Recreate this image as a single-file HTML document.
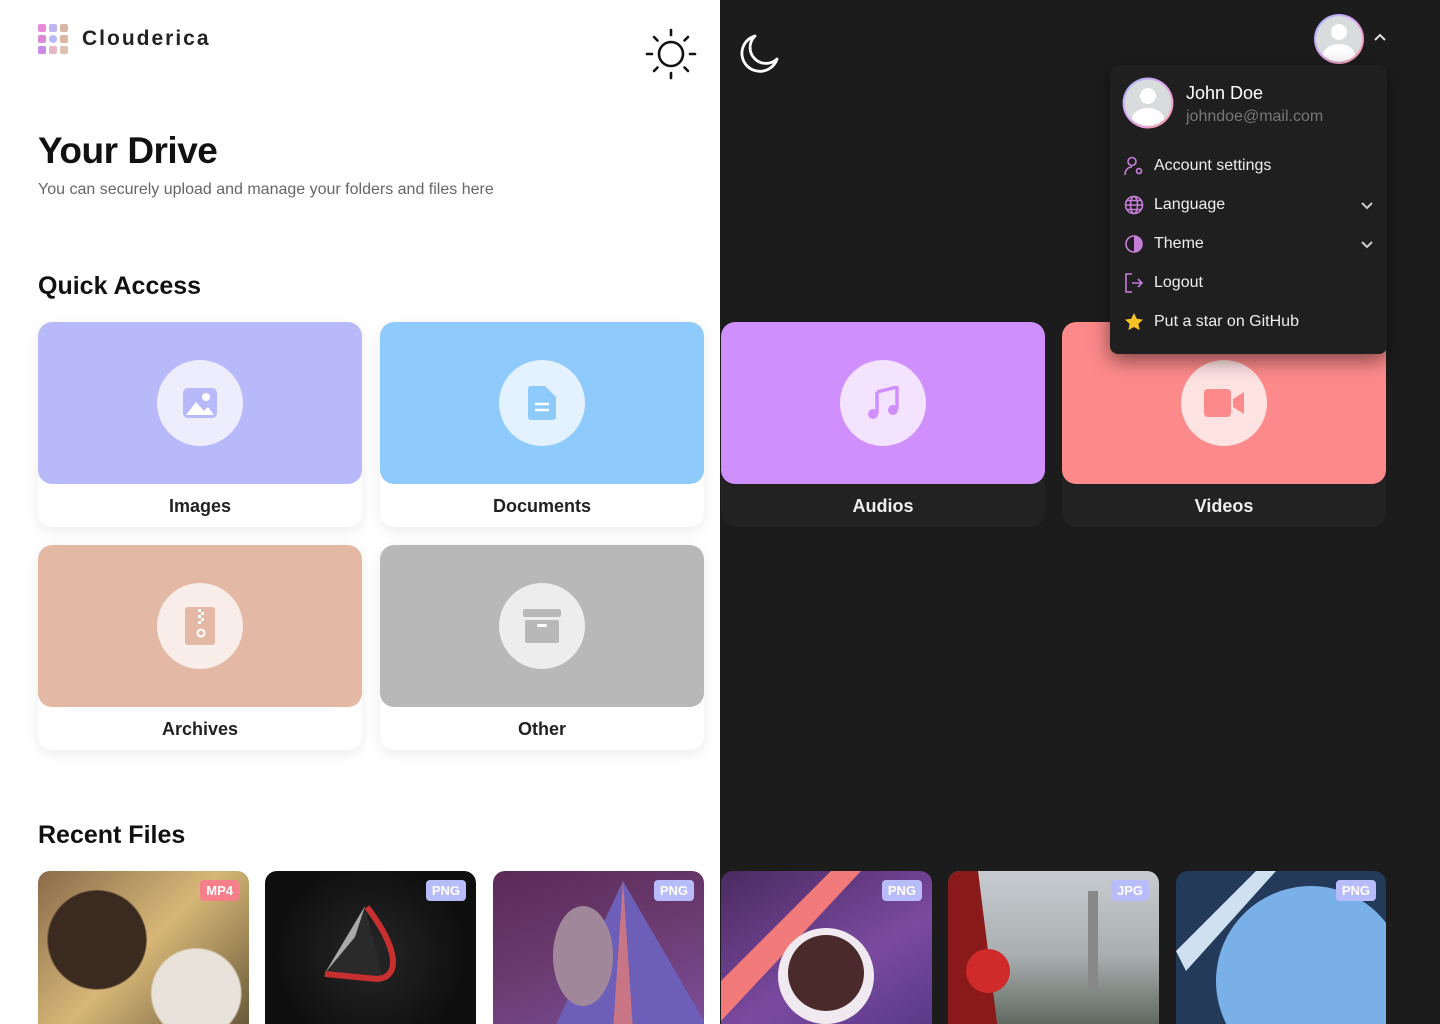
<!DOCTYPE html>
<html style="overflow:hidden"><head><meta charset="utf-8"><style>
*{box-sizing:border-box;margin:0;padding:0}
html,body{width:1440px;height:1024px;overflow:hidden}
body{position:relative;font-family:"Liberation Sans",sans-serif;background:#fff}
.dark{position:absolute;left:720px;top:0;width:720px;height:1024px;background:#1c1c1c}
.abs{position:absolute}
.card{position:absolute;width:324px;height:205px;border-radius:14px;background:#fff;box-shadow:0 4px 14px rgba(0,0,0,.08);overflow:hidden}
.card.d{background:#222;box-shadow:none}
.card .top{height:162px;border-radius:14px;position:relative}
.card .ic{position:absolute;left:119px;top:38px;width:86px;height:86px;border-radius:50%;background:rgba(255,255,255,.75);display:flex;align-items:center;justify-content:center}
.card .lb{text-align:center;font-weight:bold;font-size:18px;color:#222;margin-top:12px}
.card.d .lb{color:#eee}
.rf{position:absolute;top:871px;width:211px;height:153px;border-radius:12px 12px 0 0;overflow:hidden}
.tag{position:absolute;top:9px;right:10px;font-size:13px;font-weight:bold;color:#fff;padding:3px 6px;border-radius:4px;background:#b9bcfb}
.menu{position:absolute;left:1110px;top:65px;width:277px;height:289px;background:#1f1f1f;border-radius:8px;box-shadow:0 6px 20px rgba(0,0,0,.5)}
.mi{position:absolute;left:14px;display:flex;align-items:center;color:#eee;font-size:16px}
.mi svg{margin-right:10px}
</style></head><body>
<div class="dark"></div>
<svg class="abs" style="left:38px;top:24px" width="30" height="30" viewBox="0 0 30 30">
<rect x="0" y="0" width="8" height="8" rx="2" fill="#e88ad8"/><rect x="11" y="0" width="8" height="8" rx="2" fill="#c2b6f0"/><rect x="22" y="0" width="8" height="8" rx="2" fill="#d9b7a8"/>
<rect x="0" y="11" width="8" height="8" rx="2" fill="#dd8ad6"/><circle cx="15" cy="15" r="4" fill="#b8b9f8"/><rect x="22" y="11" width="8" height="8" rx="2" fill="#dcb8a4"/>
<rect x="0" y="22" width="8" height="8" rx="2" fill="#c98ae8"/><rect x="11" y="22" width="8" height="8" rx="2" fill="#e6b8c6"/><rect x="22" y="22" width="8" height="8" rx="2" fill="#ddc0b2"/></svg>
<div class="abs" style="left:82px;top:27px;font-size:21px;font-weight:bold;letter-spacing:2px;color:#222">Clouderica</div>
<svg class="abs" style="left:645px;top:28px" width="52" height="52" viewBox="0 0 52 52" fill="none" stroke="#111" stroke-width="2.6" stroke-linecap="round">
<circle cx="26" cy="26" r="12"/><path d="M26 2v5M26 45v5M2 26h5M45 26h5M9 9l3.5 3.5M39.5 39.5L43 43M9 43l3.5-3.5M39.5 12.5L43 9"/></svg>
<svg class="abs" style="left:737px;top:32px" width="44" height="44" viewBox="0 0 44 44" fill="none" stroke="#fff" stroke-width="2.8" stroke-linejoin="round">
<path d="M18 4A18 18 0 1 0 40 27A14 14 0 0 1 18 4Z"/></svg>
<svg class="abs" style="left:1313px;top:13px" width="52" height="52" viewBox="0 0 52 52"><defs><linearGradient id="g" x1="0" y1="0" x2="1" y2="1"><stop offset="0" stop-color="#9bb8ff"/><stop offset=".5" stop-color="#e0a0f0"/><stop offset="1" stop-color="#ff9a9a"/></linearGradient></defs>
<circle cx="26" cy="26" r="25" fill="url(#g)"/><circle cx="26" cy="26" r="23" fill="#d8dcdc"/><circle cx="26" cy="19" r="8" fill="#fff"/><path d="M10 42a16 11 0 0 1 32 0a23 23 0 0 1-32 0z" fill="#fff"/></svg>
<svg class="abs" style="left:1373px;top:33px" width="14" height="10" viewBox="0 0 14 10" fill="none" stroke="#ddd" stroke-width="2"><path d="M2 7l5-5 5 5"/></svg>

<div class="abs" style="left:38px;top:130px;font-size:37px;font-weight:bold;color:#111;letter-spacing:-.5px">Your Drive</div>
<div class="abs" style="left:38px;top:181px;font-size:16px;color:#666">You can securely upload and manage your folders and files here</div>
<div class="abs" style="left:38px;top:272px;font-size:25px;font-weight:bold;color:#111">Quick Access</div>

<div class="card" style="left:38px;top:322px"><div class="top" style="background:#b7b9fb"><div class="ic"><svg width="36" height="32" viewBox="0 0 36 32"><rect x="1" y="1" width="34" height="30" rx="5" fill="#b7b9fb"/><circle cx="24" cy="10" r="4" fill="#fff"/><path d="M4 28l10-13 8 9 4-4 6 8z" fill="#fff"/></svg></div></div><div class="lb">Images</div></div>
<div class="card" style="left:380px;top:322px"><div class="top" style="background:#8fcafc"><div class="ic"><svg width="28" height="34" viewBox="0 0 28 34"><path d="M3 0h14l11 11v20a3 3 0 0 1-3 3H3a3 3 0 0 1-3-3V3a3 3 0 0 1 3-3z" fill="#8fcafc"/><path d="M7 18h14M7 24h14" stroke="#fff" stroke-width="2.5"/></svg></div></div><div class="lb">Documents</div></div>
<div class="card d" style="left:721px;top:322px"><div class="top" style="background:#cf8ffc"><div class="ic"><svg width="32" height="34" viewBox="0 0 32 34"><path d="M10 6l20-5v22" stroke="#cf8ffc" stroke-width="3.5" fill="none"/><path d="M10 6v22" stroke="#cf8ffc" stroke-width="3.5"/><circle cx="6" cy="28" r="5" fill="#cf8ffc"/><circle cx="26" cy="24" r="5" fill="#cf8ffc"/></svg></div></div><div class="lb">Audios</div></div>
<div class="card d" style="left:1062px;top:322px"><div class="top" style="background:#fd8a8a"><div class="ic"><svg width="40" height="28" viewBox="0 0 40 28"><rect x="0" y="0" width="27" height="28" rx="4" fill="#fd8a8a"/><path d="M29 10l11-7v22l-11-7z" fill="#fd8a8a"/></svg></div></div><div class="lb">Videos</div></div>
<div class="card" style="left:38px;top:545px"><div class="top" style="background:#e3b8a5"><div class="ic"><svg width="30" height="38" viewBox="0 0 30 38"><rect x="0" y="0" width="30" height="38" rx="3" fill="#e3b8a5"/><path d="M13 2h3v3h-3zM16 5h3v3h-3zM13 8h3v3h-3zM16 11h3v3h-3zM13 14h3v3h-3z" fill="#fff"/><circle cx="16" cy="26" r="3.5" fill="none" stroke="#fff" stroke-width="2"/></svg></div></div><div class="lb">Archives</div></div>
<div class="card" style="left:380px;top:545px"><div class="top" style="background:#b8b8b8"><div class="ic"><svg width="38" height="34" viewBox="0 0 38 34"><rect x="0" y="0" width="38" height="8" rx="2" fill="#b8b8b8"/><rect x="2" y="11" width="34" height="23" rx="2" fill="#b8b8b8"/><rect x="14" y="15" width="10" height="3" rx="1.5" fill="#fff"/></svg></div></div><div class="lb">Other</div></div>

<div class="abs" style="left:38px;top:821px;font-size:25px;font-weight:bold;color:#111">Recent Files</div>
<div class="rf" style="left:38px;background:radial-gradient(circle at 28% 45%,#3a2a20 0 28%,transparent 29%),radial-gradient(circle at 75% 80%,#e8e2da 0 22%,transparent 23%),linear-gradient(135deg,#8a6a4a,#d7b777 50%,#6a5a3a)"><span class="tag" style="background:#f57f8b">MP4</span></div>
<div class="rf" style="left:265px;background:radial-gradient(circle at 50% 55%,#262626,#0f0f0f 70%)"><svg class="abs" style="left:50px;top:30px" width="100" height="100" viewBox="0 0 100 100"><path d="M50 5L8 75l60 4z" fill="#2a2a2a"/><path d="M50 5L10 72l30-36z" fill="#aaa"/><path d="M52 6c30 40 35 70 10 72L10 73" stroke="#c83030" stroke-width="6" fill="none"/></svg><span class="tag">PNG</span></div>
<div class="rf" style="left:493px;background:linear-gradient(160deg,#5c2a56,#6b3b70 50%,#7c4e9a)"><svg class="abs" style="left:0;top:0" width="211" height="160"><path d="M130 10L211 150v10H60z" fill="#6d5fb8"/><path d="M130 10L140 160h-20z" fill="#f08070" opacity=".7"/><ellipse cx="90" cy="85" rx="30" ry="50" fill="#a0889a"/></svg><span class="tag">PNG</span></div>
<div class="rf" style="left:721px;background:linear-gradient(150deg,#4a2a60,#7a4aa0 60%,#5a3a8a)"><svg class="abs" style="left:0;top:0" width="211" height="160"><path d="M0 110L110 0h30L0 150z" fill="#f27a7a"/><circle cx="105" cy="105" r="48" fill="#f0eaf0"/><circle cx="105" cy="102" r="38" fill="#4a2a2a"/></svg><span class="tag">PNG</span></div>
<div class="rf" style="left:948px;background:linear-gradient(180deg,#c8ccd0,#a9aeb0 55%,#606a60)"><svg class="abs" style="left:0;top:0" width="211" height="160"><path d="M0 0h30l20 160H0z" fill="#8a1a1a"/><circle cx="40" cy="100" r="22" fill="#d02a2a"/><rect x="140" y="20" width="10" height="100" fill="#888"/></svg><span class="tag">JPG</span></div>
<div class="rf" style="left:1176px;width:210px;background:#243a5a"><svg class="abs" style="left:0;top:0" width="211" height="160"><circle cx="135" cy="110" r="95" fill="#7ab0e8"/><path d="M0 80L80 0h20L10 100z" fill="#cfe0f0"/></svg><span class="tag">PNG</span></div>

<div class="menu">
<svg class="abs" style="left:12px;top:12px" width="52" height="52" viewBox="0 0 52 52"><circle cx="26" cy="26" r="25.5" fill="url(#g)"/><circle cx="26" cy="26" r="23.5" fill="#d8dcdc"/><circle cx="26" cy="19" r="8" fill="#fff"/><path d="M10 42a16 11 0 0 1 32 0a23 23 0 0 1-32 0z" fill="#fff"/></svg>
<div class="abs" style="left:76px;top:18px;color:#fff;font-size:18px">John Doe</div>
<div class="abs" style="left:76px;top:43px;color:#777;font-size:16px">johndoe@mail.com</div>
<div class="mi" style="top:91px"><svg width="20" height="20" viewBox="0 0 20 20" fill="none" stroke="#c77ed8" stroke-width="1.6"><circle cx="8" cy="5.5" r="4"/><path d="M1 19c0-5 3-8 7-8"/><circle cx="15" cy="15" r="2.5"/></svg>Account settings</div>
<div class="mi" style="top:130px"><svg width="20" height="20" viewBox="0 0 20 20" fill="none" stroke="#c77ed8" stroke-width="1.6"><circle cx="10" cy="10" r="8.5"/><ellipse cx="10" cy="10" rx="3.5" ry="8.5"/><path d="M1.5 10h17M3 5.5h14M3 14.5h14"/></svg>Language</div>
<div class="mi" style="top:169px"><svg width="20" height="20" viewBox="0 0 20 20"><circle cx="10" cy="10" r="8" fill="none" stroke="#c77ed8" stroke-width="1.6"/><path d="M10 2a8 8 0 0 1 0 16z" fill="#c77ed8"/></svg>Theme</div>
<div class="mi" style="top:208px"><svg width="20" height="20" viewBox="0 0 20 20" fill="none" stroke="#c77ed8" stroke-width="1.6"><path d="M8 1H2v18h6M8 10h10M14 6l4 4-4 4"/></svg>Logout</div>
<div class="mi" style="top:247px"><svg width="20" height="20" viewBox="0 0 20 20"><path d="M10 1l2.8 5.8 6.2.8-4.6 4.3 1.2 6.2L10 15l-5.6 3.1 1.2-6.2L1 7.6l6.2-.8z" fill="#f7c325"/></svg>Put a star on GitHub</div>
<svg class="abs" style="left:250px;top:135px" width="14" height="10" viewBox="0 0 14 10" fill="none" stroke="#ccc" stroke-width="2"><path d="M2 3l5 5 5-5"/></svg>
<svg class="abs" style="left:250px;top:174px" width="14" height="10" viewBox="0 0 14 10" fill="none" stroke="#ccc" stroke-width="2"><path d="M2 3l5 5 5-5"/></svg>
</div>
</body></html>
